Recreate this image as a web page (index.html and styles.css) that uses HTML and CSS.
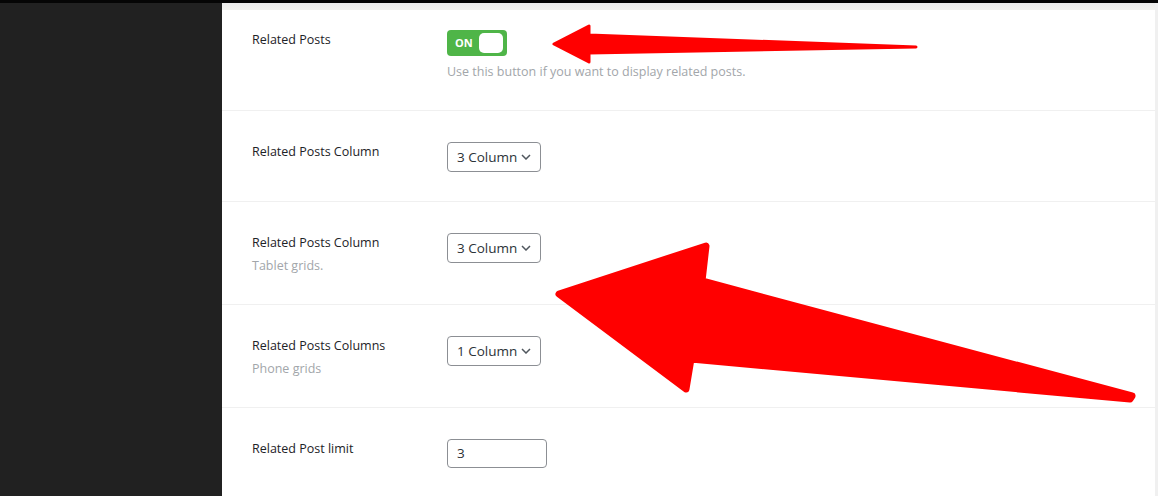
FILE: index.html
```html
<!DOCTYPE html>
<html lang="en">
<head>
  <meta charset="UTF-8" />
  <meta name="viewport" content="width=device-width, initial-scale=1.0"/>
  <title>Related Posts Settings</title>
  <link rel="stylesheet" href="styles.css">
</head>
<body>
  <div class="topbar"></div>
  <div class="layout">
    <aside class="sidebar"></aside>
    <main class="panel">
      <div class="fade"></div>

      <div class="row first">
        <div class="label">Related Posts</div>
        <div class="control">
          <div class="toggle">
            <span class="toggle-text">ON</span>
            <span class="knob"></span>
          </div>
          <div class="hint">Use this button if you want to display related posts.</div>
        </div>
      </div>

      <div class="row">
        <div class="label">Related Posts Column</div>
        <div class="control">
          <div class="select"><span>3 Column</span>
            <svg width="10" height="6" viewBox="0 0 10 6"><path d="M1 1l4 4 4-4" fill="none" stroke="#50575e" stroke-width="1.5"/></svg>
          </div>
        </div>
      </div>

      <div class="row">
        <div class="label">Related Posts Column
          <div class="note">Tablet grids.</div>
        </div>
        <div class="control">
          <div class="select"><span>3 Column</span>
            <svg width="10" height="6" viewBox="0 0 10 6"><path d="M1 1l4 4 4-4" fill="none" stroke="#50575e" stroke-width="1.5"/></svg>
          </div>
        </div>
      </div>

      <div class="row">
        <div class="label">Related Posts Columns
          <div class="note">Phone grids</div>
        </div>
        <div class="control">
          <div class="select"><span>1 Column</span>
            <svg width="10" height="6" viewBox="0 0 10 6"><path d="M1 1l4 4 4-4" fill="none" stroke="#50575e" stroke-width="1.5"/></svg>
          </div>
        </div>
      </div>

      <div class="row">
        <div class="label">Related Post limit</div>
        <div class="control">
          <div class="number">3</div>
        </div>
      </div>
    </main>
  </div>

  <!-- annotation arrows drawn over the screenshot -->
  <svg class="marks" width="1158" height="496" viewBox="0 0 1158 496">
    <polygon points="554,44 589,26 589,35 916,47 589,53 589,62" fill="#ff0000" stroke="#ff0000" stroke-width="3" stroke-linejoin="round"/>
    <polygon points="559,294 706,246 702,281 1132,396 1130,399 691,359 686,389" fill="#ff0000" stroke="#ff0000" stroke-width="7" stroke-linejoin="round"/>
  </svg>
</body>
</html>
```

FILE: styles.css
```css
body {
  margin: 0;
  background-color: #ffffff;
  font-family: 'Open Sans', 'Noto Sans', sans-serif;
  color: #1d2327;
  overflow: hidden;
  height: 496px;
}

.topbar {
  height: 3px;
  background-color: #050505;
}

.layout {
  display: flex;
  height: 493px;
}

.sidebar {
  width: 222px;
  flex-shrink: 0;
  background-color: #212121;
}

.panel {
  flex: 1;
  background-color: #ffffff;
  border-right: 3px solid #f0f0f0;
  overflow: hidden;
}

.fade {
  height: 7px;
  background: linear-gradient(#ececec, #f3f3ef);
}

.row {
  display: flex;
  padding: 31px 0 29px 30px;
  border-bottom: 1px solid #f0f0f0;
}

.row.first {
  padding-top: 20px;
}

.label {
  width: 195px;
  flex-shrink: 0;
  font-size: 12.5px;
  font-weight: 500;
  line-height: 19px;
  color: #1d2327;
}

.note {
  margin-top: 4px;
  font-weight: 400;
  color: #a2a6aa;
}

.control {
  display: flex;
  flex-direction: column;
  align-items: flex-start;
}

.toggle {
  position: relative;
  width: 60px;
  height: 26px;
  border-radius: 4px;
  background-color: #4fb548;
}

.toggle-text {
  position: absolute;
  left: 8px;
  top: 6px;
  font-size: 11px;
  font-weight: 700;
  line-height: 14px;
  color: #ffffff;
}

.knob {
  position: absolute;
  right: 4px;
  top: 3px;
  width: 24px;
  height: 20px;
  border-radius: 5px;
  background-color: #ffffff;
}

.hint {
  margin-top: 6px;
  font-size: 12.5px;
  line-height: 19px;
  color: #a2a6aa;
}

.select {
  display: flex;
  align-items: center;
  justify-content: space-between;
  box-sizing: border-box;
  width: 94px;
  height: 30px;
  padding: 0 9px 0 9px;
  border: 1px solid #8c8f94;
  border-radius: 4px;
  font-size: 13.5px;
  color: #2c3338;
}

.number {
  box-sizing: border-box;
  width: 100px;
  height: 29px;
  padding: 0 9px;
  border: 1px solid #8c8f94;
  border-radius: 4px;
  font-size: 13.5px;
  line-height: 27px;
  color: #2c3338;
}

.marks {
  position: absolute;
  top: 0;
  left: 0;
  pointer-events: none;
}
```
